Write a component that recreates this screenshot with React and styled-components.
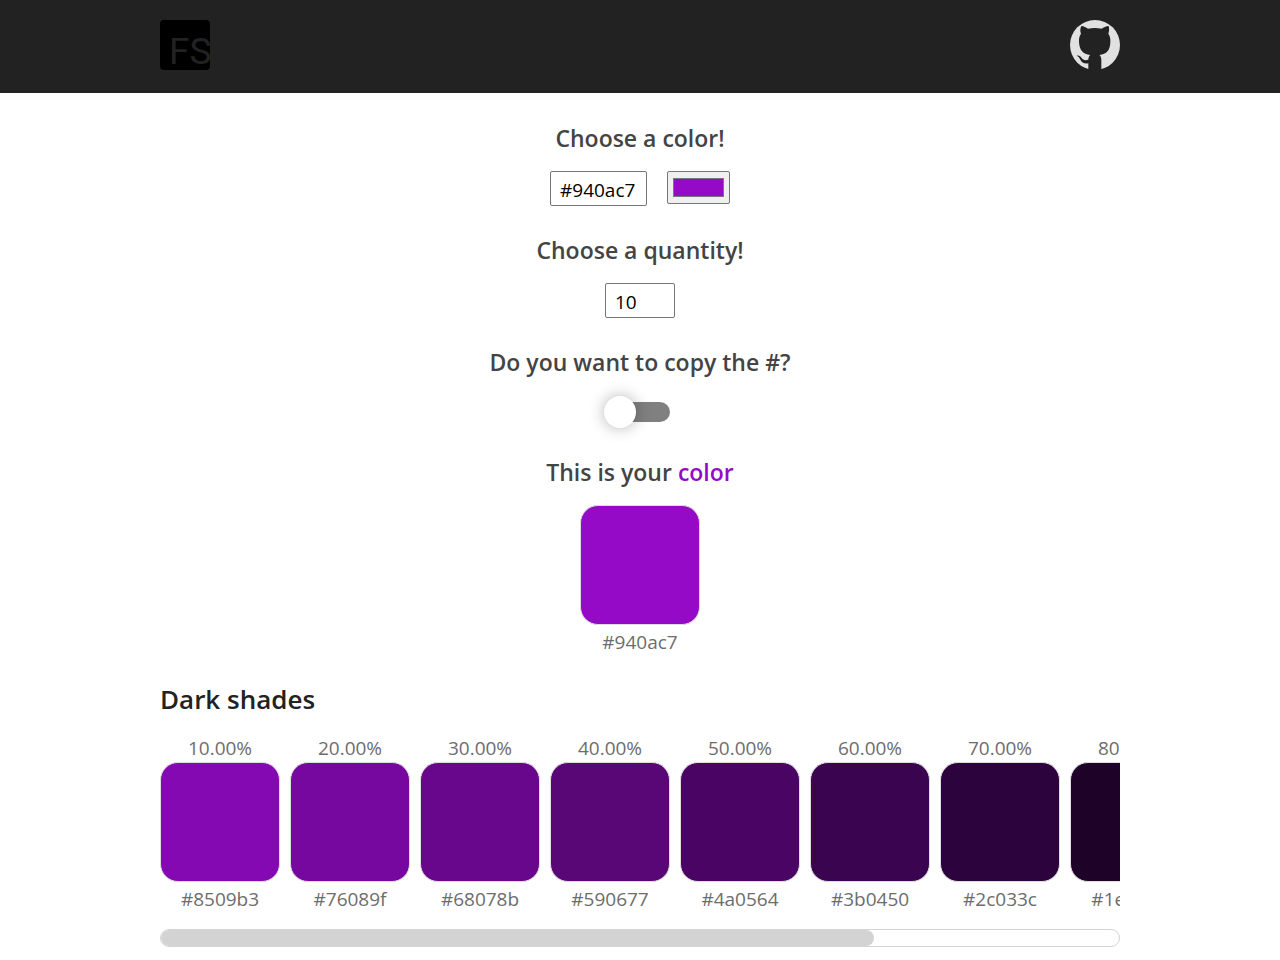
import { useEffect, useRef, useState } from 'react';
import styled, { createGlobalStyle } from 'styled-components';

const GlobalStyle = createGlobalStyle`
  * {
    box-sizing: border-box;
  }

  body {
    margin: 0;
    background: #fff;
    color: #222;
    font-family: 'Segoe UI', 'Open Sans', 'Noto Sans', sans-serif;
    font-size: 19px;
  }
`;

const Header = styled.header`
  background: #222;
  padding: 20px 160px 23px;
`;

const Nav = styled.nav`
  display: flex;
  justify-content: space-between;
`;

const NavLink = styled.a`
  display: flex;
`;

const Main = styled.main`
  padding: 30px 160px 13px;
`;

const Options = styled.section`
  display: flex;
  flex-direction: column;
  align-items: center;
  gap: 29px;
`;

const Option = styled.div`
  display: flex;
  flex-direction: column;
  align-items: center;
  gap: 18px;
`;

const Question = styled.h2`
  margin: 0;
  color: #444;
  font-size: 23px;
  font-weight: 600;
  line-height: 30px;
`;

const Accent = styled.span`
  color: ${({ $color }) => $color};
`;

const Controls = styled.div`
  display: flex;
  align-items: flex-start;
  gap: 20px;
`;

const Field = styled.input`
  width: ${({ $width }) => $width};
  height: 35px;
  padding: 2px 9px 0;
  border: 1px solid #767676;
  border-radius: 2px;
  background: #fff;
  color: #000;
  font-family: inherit;
  font-size: 19px;
`;

const Picker = styled.input`
  width: 63px;
  height: 33px;
  padding: 2px 3px;
  border: 1px solid #767676;
  border-radius: 2px;
  background: #efefef;
`;

const Switch = styled.input`
  appearance: none;
  display: flex;
  align-items: center;
  width: 60px;
  height: 20px;
  margin: 7px 0 6px;
  border-radius: 10px;
  background: #808080;
  cursor: pointer;

  &::before {
    content: '';
    flex: none;
    width: 32px;
    height: 32px;
    margin-left: -6px;
    border-radius: 50%;
    background: #fff;
    box-shadow: 0 0 15px rgba(0, 0, 0, 0.3);
  }

  &:checked {
    justify-content: flex-end;
    background: #940ac7;
  }

  &:checked::before {
    margin: 0 -6px 0 0;
  }
`;

const Swatch = styled.button`
  display: block;
  width: 120px;
  height: 120px;
  padding: 0;
  border: 1px solid #ddd;
  border-radius: 18px;
  background: ${({ $color }) => $color};
  cursor: pointer;
`;

const Shade = styled.div`
  flex: none;
  display: flex;
  flex-direction: column;
  align-items: center;
`;

const ShadeText = styled.span`
  color: #6d6d6d;
  font-size: 19px;
  line-height: 28px;
`;

const ShadeCode = styled(ShadeText)`
  margin-top: 3px;
`;

const Title = styled.h2`
  margin: 26px 0 18px;
  color: #222;
  font-size: 26px;
  font-weight: 600;
  line-height: 34px;
`;

const Shades = styled.div`
  display: flex;
  gap: 10px;
  padding-bottom: 16px;
  overflow-x: auto;
  scrollbar-width: none;
`;

const ScrollTrack = styled.div`
  height: 18px;
  border: 1px solid #d3d3d3;
  border-radius: 9px;
  overflow: hidden;
`;

const ScrollThumb = styled.div`
  height: 100%;
  border-radius: 9px;
  background: #d3d3d3;
`;

function Logo() {
  return (
    <svg width="50" height="50" viewBox="0 0 50 50" aria-hidden="true">
      <rect width="50" height="50" rx="4" fill="#000" />
      <text x="9" y="44" fill="#222" fontFamily="Roboto, sans-serif" fontSize="37" fontWeight="400">FS</text>
    </svg>
  );
}

function GithubMark() {
  return (
    <svg width="50" height="50" viewBox="12 12 150 150" aria-hidden="true">
      <circle cx="87" cy="87" r="75" fill="#e1e1e1" />
      <path
        fill="#222"
        d="M46 30C42 38 42 46 45 53C39 61 39 68 39 77C40 103 51 114 73 117C69 120 67 125 67 131C58 134 51 132 47 126C43 119 38 117 32 119C38 121 41 127 44 133C49 142 57 144 67 142V165H106V132C106 125 104 120 100 117C122 114 133 103 133 77C133 68 133 61 127 53C130 46 130 38 128 30C120 31 113 34 107 38C94 35 79 35 66 38C60 34 53 31 46 30Z"
      />
    </svg>
  );
}

const toHex = (value) => Math.round(value).toString(16).padStart(2, '0');

// mixes the color with black in equal steps
function darkShades(color, quantity) {
  const channels = [1, 3, 5].map((i) => parseInt(color.slice(i, i + 2), 16));

  return Array.from({ length: quantity }, (_, i) => {
    const amount = (i + 1) / quantity;
    return {
      percent: `${(amount * 100).toFixed(2)}%`,
      hex: '#' + channels.map((c) => toHex(c * (1 - amount))).join(''),
    };
  });
}

function ShadeList({ shades, onCopy }) {
  const listRef = useRef(null);
  const [thumb, setThumb] = useState({ size: 100, start: 0 });

  const updateThumb = () => {
    const { clientWidth, scrollWidth, scrollLeft } = listRef.current;
    setThumb({
      size: (clientWidth / scrollWidth) * 100,
      start: (scrollLeft / scrollWidth) * 100,
    });
  };

  useEffect(() => {
    updateThumb();
    window.addEventListener('resize', updateThumb);
    return () => window.removeEventListener('resize', updateThumb);
  }, [shades.length]);

  const scrollTo = (e) => {
    const box = e.currentTarget.getBoundingClientRect();
    const { clientWidth, scrollWidth } = listRef.current;
    listRef.current.scrollLeft = ((e.clientX - box.left) / box.width) * scrollWidth - clientWidth / 2;
  };

  return (
    <>
      <Shades id="shades" ref={listRef} onScroll={updateThumb}>
        {shades.map(({ percent, hex }) => (
          <Shade key={percent}>
            <ShadeText>{percent}</ShadeText>
            <Swatch $color={hex} aria-label={`Copy ${hex}`} onClick={() => onCopy(hex)} />
            <ShadeCode>{hex}</ShadeCode>
          </Shade>
        ))}
      </Shades>
      <ScrollTrack
        role="scrollbar"
        aria-controls="shades"
        aria-orientation="horizontal"
        aria-valuenow={Math.round(thumb.start)}
        onClick={scrollTo}
      >
        <ScrollThumb style={{ width: `${thumb.size}%`, marginLeft: `${thumb.start}%` }} />
      </ScrollTrack>
    </>
  );
}

function App() {
  const [text, setText] = useState('#940ac7');
  const [color, setColor] = useState('#940ac7');
  const [quantity, setQuantity] = useState('10');
  const [withHash, setWithHash] = useState(false);

  const changeColor = (value) => {
    setText(value);
    if (/^#[0-9a-f]{6}$/i.test(value)) setColor(value);
  };

  const copy = (hex) => navigator.clipboard?.writeText(withHash ? hex : hex.slice(1));

  return (
    <>
      <GlobalStyle />
      <Header>
        <Nav>
          <NavLink href="#" aria-label="Home"><Logo /></NavLink>
          <NavLink href="#github" aria-label="GitHub"><GithubMark /></NavLink>
        </Nav>
      </Header>
      <Main>
        <Options>
          <Option>
            <Question as="label" htmlFor="color">Choose a color!</Question>
            <Controls>
              <Field id="color" $width="97px" value={text} onChange={(e) => changeColor(e.target.value)} />
              <Picker type="color" aria-label="Color picker" value={color} onChange={(e) => changeColor(e.target.value)} />
            </Controls>
          </Option>
          <Option>
            <Question as="label" htmlFor="quantity">Choose a quantity!</Question>
            <Field id="quantity" type="number" min="1" max="100" $width="70px" value={quantity} onChange={(e) => setQuantity(e.target.value)} />
          </Option>
          <Option>
            <Question as="label" htmlFor="hash">Do you want to copy the #?</Question>
            <Switch id="hash" type="checkbox" checked={withHash} onChange={(e) => setWithHash(e.target.checked)} />
          </Option>
          <Option>
            <Question>This is your <Accent $color={color}>color</Accent></Question>
            <Shade>
              <Swatch $color={color} aria-label={`Copy ${color}`} onClick={() => copy(color)} />
              <ShadeCode>{color}</ShadeCode>
            </Shade>
          </Option>
        </Options>
        <Title>Dark shades</Title>
        <ShadeList shades={darkShades(color, Number(quantity) || 1)} onCopy={copy} />
      </Main>
    </>
  );
}

export default App;
